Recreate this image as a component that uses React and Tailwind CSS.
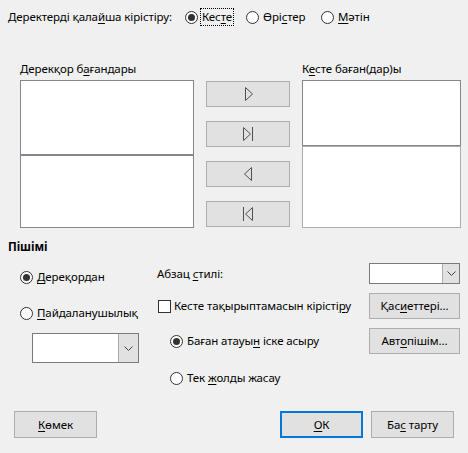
import React from 'react';

function Radio({ checked }) {
  return (
    <span className="w-[13px] h-[13px] rounded-full border border-[#333333] bg-white flex items-center justify-center shrink-0">
      {checked && <span className="w-[7px] h-[7px] rounded-full bg-[#333333]" />}
    </span>
  );
}

function Btn({ children, className = '' }) {
  return (
    <div className={`flex items-center justify-center bg-[#e1e1e1] border border-[#adadad] ${className}`}>
      <span className="whitespace-nowrap">{children}</span>
    </div>
  );
}

function Chevron() {
  return (
    <svg width="9" height="5" viewBox="0 0 9 5" fill="none">
      <path d="M0.5 0.5 L4.5 4.5 L8.5 0.5" stroke="#444" strokeWidth="1" />
    </svg>
  );
}

function Combo({ className = '', btnW = 'w-[17px]' }) {
  return (
    <div className={`flex bg-white border border-[#7a7a7a] ${className}`}>
      <div className="flex-1" />
      <div className={`${btnW} bg-[#e1e1e1] border-l border-[#adadad] flex items-center justify-center`}>
        <Chevron />
      </div>
    </div>
  );
}

function Arrow({ kind }) {
  const stroke = '#505050';
  return (
    <svg className="block" width="14" height="16" viewBox="0 0 14 16" fill="none">
      {kind === 'right' && <path d="M4.5 1.5 L11.5 8 L4.5 14.5 Z" stroke={stroke} strokeWidth="1" />}
      {kind === 'rightAll' && (
        <>
          <path d="M2.5 1.5 L9.5 8 L2.5 14.5 Z" stroke={stroke} strokeWidth="1" />
          <path d="M11.5 1 L11.5 15" stroke={stroke} strokeWidth="1" />
        </>
      )}
      {kind === 'left' && <path d="M10.5 1.5 L3.5 8 L10.5 14.5 Z" stroke={stroke} strokeWidth="1" />}
      {kind === 'leftAll' && (
        <>
          <path d="M2.5 1 L2.5 15" stroke={stroke} strokeWidth="1" />
          <path d="M11.5 1.5 L4.5 8 L11.5 14.5 Z" stroke={stroke} strokeWidth="1" />
        </>
      )}
    </svg>
  );
}

function ArrowBtn({ kind }) {
  return (
    <div className="h-[26px] flex items-center justify-center bg-[#e1e1e1] border border-[#adadad]">
      <Arrow kind={kind} />
    </div>
  );
}

const U = ({ children }) => <span className="underline underline-offset-2 decoration-1">{children}</span>;

export default function App() {
  return (
    <div className="w-[468px] h-[453px] bg-[#f0f0f0] text-[11.5px] tracking-[-0.1px] leading-[16px] text-black font-['Noto_Sans',sans-serif] flex flex-col">
      {/* Top row */}
      <div className="mt-[8px] h-[18px] flex items-center pl-[8px]">
        <span className="w-[177px] whitespace-nowrap">Деректерді қала<U>й</U>ша кірістіру:</span>
        <div className="w-[61px] flex items-center gap-[2px]">
          <Radio checked />
          <span className="h-[18px] px-[1px] border border-dotted border-black flex items-center whitespace-nowrap"><span>Кес<U>т</U>е</span></span>
        </div>
        <div className="w-[75px] flex items-center gap-[4px]">
          <Radio />
          <span className="whitespace-nowrap">Өрі<U>с</U>тер</span>
        </div>
        <div className="flex items-center gap-[4px]">
          <Radio />
          <span className="whitespace-nowrap"><U>М</U>әтін</span>
        </div>
      </div>

      {/* Lists section */}
      <div className="mt-[34px] flex pl-[20px]">
        <div className="w-[174px] flex flex-col">
          <div className="h-[18px] mb-[2px] flex items-center whitespace-nowrap"><span>Дерекқор б<U>а</U>ғандары</span></div>
          <div className="h-[75px] bg-white border border-[#828790]" />
          <div className="h-[73px] bg-white border border-[#828790]" />
        </div>
        <div className="ml-[12px] w-[84px] pt-[21px] flex flex-col gap-[14px]">
          <ArrowBtn kind="right" />
          <ArrowBtn kind="rightAll" />
          <ArrowBtn kind="left" />
          <ArrowBtn kind="leftAll" />
        </div>
        <div className="ml-[12px] w-[159px] flex flex-col">
          <div className="h-[18px] mb-[2px] flex items-center whitespace-nowrap"><span>К<U>е</U>сте баған(дар)ы</span></div>
          <div className="h-[66px] bg-white border border-[#828790]" />
          <div className="h-[82px] bg-white border border-[#adadad]" />
        </div>
      </div>

      {/* Format heading */}
      <div className="mt-[11px] h-[16px] pl-[8px] font-bold">Пішімі</div>

      {/* Format section */}
      <div className="mt-[7px] flex">
        <div className="w-[157px] pl-[20px] flex flex-col">
          <div className="h-[30px] flex items-center gap-[4px]">
            <Radio checked />
            <span className="whitespace-nowrap"><U>Д</U>ереқордан</span>
          </div>
          <div className="mt-[11px] h-[20px] flex items-center gap-[4px]">
            <Radio />
            <span className="whitespace-nowrap"><U>П</U>айдаланушылық</span>
          </div>
          <Combo className="mt-[10px] ml-[12px] w-[107px] h-[30px]" btnW="w-[20px]" />
        </div>
        <div className="w-[303px] flex flex-col">
          <div className="h-[23px] flex items-center justify-between">
            <span className="whitespace-nowrap">Абзац <U>с</U>тилі:</span>
            <Combo className="w-[91px] h-[21px]" />
          </div>
          <div className="mt-[8px] h-[26px] flex items-center justify-between">
            <div className="flex items-center gap-[3px] pl-[1px]">
              <span className="w-[13px] h-[13px] border border-[#333333] bg-white shrink-0" />
              <span className="whitespace-nowrap">Кесте тақырыптамасын кірісті<U>р</U>у</span>
            </div>
            <Btn className="w-[91px] h-[26px]">Қас<U>и</U>еттері...</Btn>
          </div>
          <div className="mt-[9px] h-[26px] flex items-center justify-between">
            <div className="flex items-center gap-[4px] pl-[13px]">
              <Radio checked />
              <span className="whitespace-nowrap">Баған атауы<U>н</U> іске асыру</span>
            </div>
            <Btn className="w-[91px] h-[26px]">Авт<U>о</U>пішім...</Btn>
          </div>
          <div className="mt-[14px] h-[20px] flex items-center gap-[4px] pl-[13px]">
            <Radio />
            <span className="whitespace-nowrap">Тек <U>ж</U>олды жасау</span>
          </div>
        </div>
      </div>

      {/* Footer */}
      <div className="mt-auto pb-[15px] px-[14px] flex justify-between">
        <Btn className="w-[83px] h-[27px]"><U>К</U>өмек</Btn>
        <div className="flex gap-[8px]">
          <div className="w-[83px] h-[27px] flex items-center justify-center bg-[#e1e1e1] border-2 border-[#0078d7]"><span><U>О</U>К</span></div>
          <Btn className="w-[83px] h-[27px]">Ба<U>с</U> тарту</Btn>
        </div>
      </div>
    </div>
  );
}
